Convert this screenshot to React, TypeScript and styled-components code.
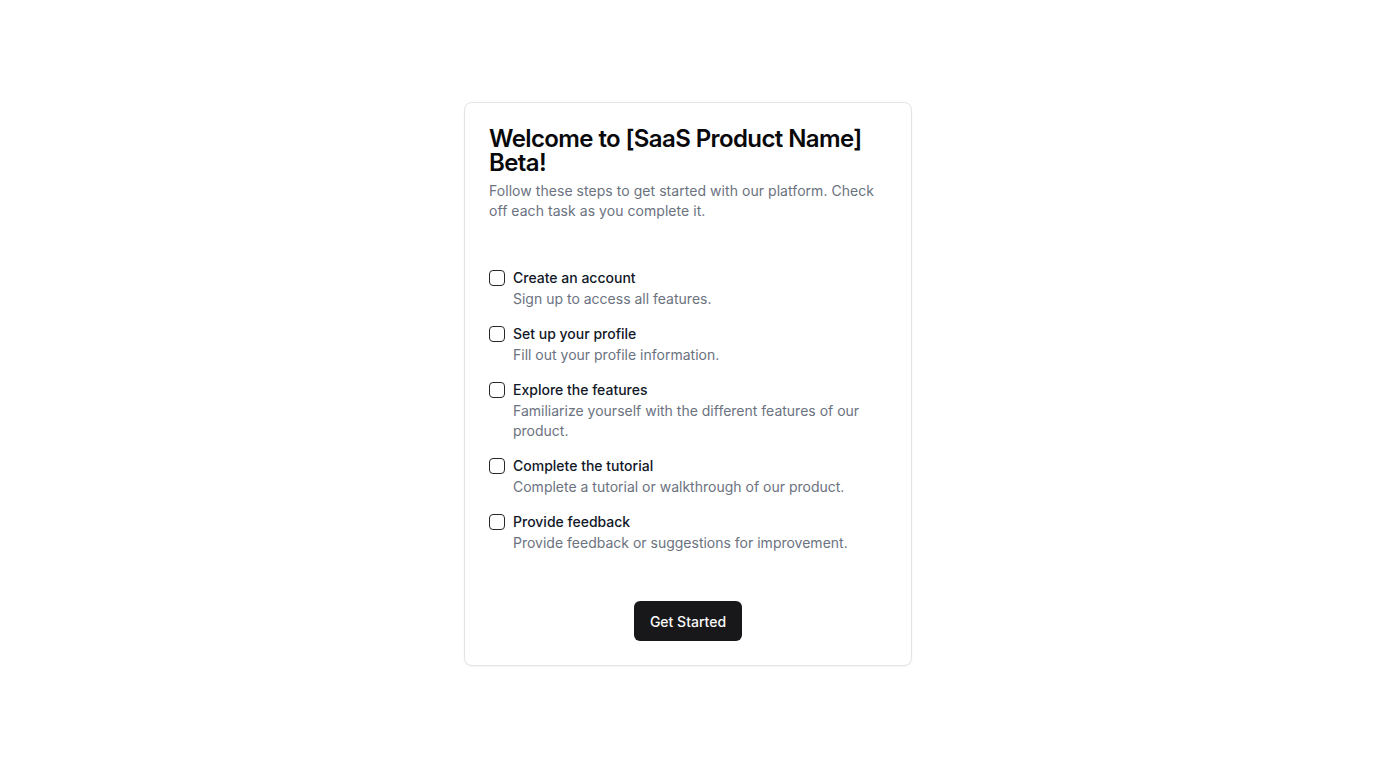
import styled, { createGlobalStyle } from 'styled-components';

const Global = createGlobalStyle`
  * { box-sizing: border-box; }
  body {
    margin: 0;
    font-family: Inter, "Noto Sans", sans-serif;
    background: #ffffff;
    color: #09090b;
  }
`;

const Page = styled.div`
  min-height: 100vh;
  display: flex;
  align-items: center;
  justify-content: center;
`;

const Card = styled.div`
  width: 448px;
  border: 1px solid #e4e4e7;
  border-radius: 8px;
  background: #fff;
  box-shadow: 0 1px 2px rgba(0, 0, 0, 0.05);
  padding: 24px;
`;

const Title = styled.h1`
  margin: 0;
  font-size: 24px;
  line-height: 24px;
  font-weight: 600;
  letter-spacing: -0.6px;
`;

const Subtitle = styled.p`
  margin: 6px 0 0;
  font-size: 14px;
  line-height: 20px;
  letter-spacing: 0.05px;
  color: #6b7280;
`;

const TaskList = styled.ul`
  list-style: none;
  margin: 47px 0 0;
  padding: 0;
  display: flex;
  flex-direction: column;
  gap: 15px;
`;

const Task = styled.li`
  display: flex;
  align-items: flex-start;
  gap: 8px;
`;

const Box = styled.input`
  appearance: none;
  margin: 2px 0 0;
  width: 16px;
  height: 16px;
  flex-shrink: 0;
  border: 1px solid #27272a;
  border-radius: 4px;
  background: #fff;
  cursor: pointer;

  &:checked {
    background: #18181b;
  }
`;

const TaskText = styled.div`
  display: flex;
  flex-direction: column;
  gap: 1px;
`;

const TaskLabel = styled.label`
  font-size: 14px;
  line-height: 20px;
  font-weight: 500;
  color: #111827;
`;

const TaskNote = styled.span`
  font-size: 14px;
  line-height: 20px;
  color: #6b7280;
`;

const Footer = styled.div`
  display: flex;
  justify-content: center;
  margin-top: 48px;
`;

const Button = styled.button`
  height: 40px;
  padding: 0 16px;
  border: none;
  border-radius: 6px;
  background: #18181b;
  color: #fafafa;
  font-family: inherit;
  font-size: 14px;
  font-weight: 500;
  cursor: pointer;
`;

const tasks = [
  { id: 'account', label: 'Create an account', note: 'Sign up to access all features.' },
  { id: 'profile', label: 'Set up your profile', note: 'Fill out your profile information.' },
  { id: 'features', label: 'Explore the features', note: 'Familiarize yourself with the different features of our product.' },
  { id: 'tutorial', label: 'Complete the tutorial', note: 'Complete a tutorial or walkthrough of our product.' },
  { id: 'feedback', label: 'Provide feedback', note: 'Provide feedback or suggestions for improvement.' },
];

export default function App() {
  return (
    <Page>
      <Global />
      <Card>
        <Title>Welcome to [SaaS Product Name] Beta!</Title>
        <Subtitle>Follow these steps to get started with our platform. Check off each task as you complete it.</Subtitle>
        <TaskList>
          {tasks.map((t) => (
            <Task key={t.id}>
              <Box type="checkbox" id={t.id} />
              <TaskText>
                <TaskLabel htmlFor={t.id}>{t.label}</TaskLabel>
                <TaskNote>{t.note}</TaskNote>
              </TaskText>
            </Task>
          ))}
        </TaskList>
        <Footer>
          <Button>Get Started</Button>
        </Footer>
      </Card>
    </Page>
  );
}
